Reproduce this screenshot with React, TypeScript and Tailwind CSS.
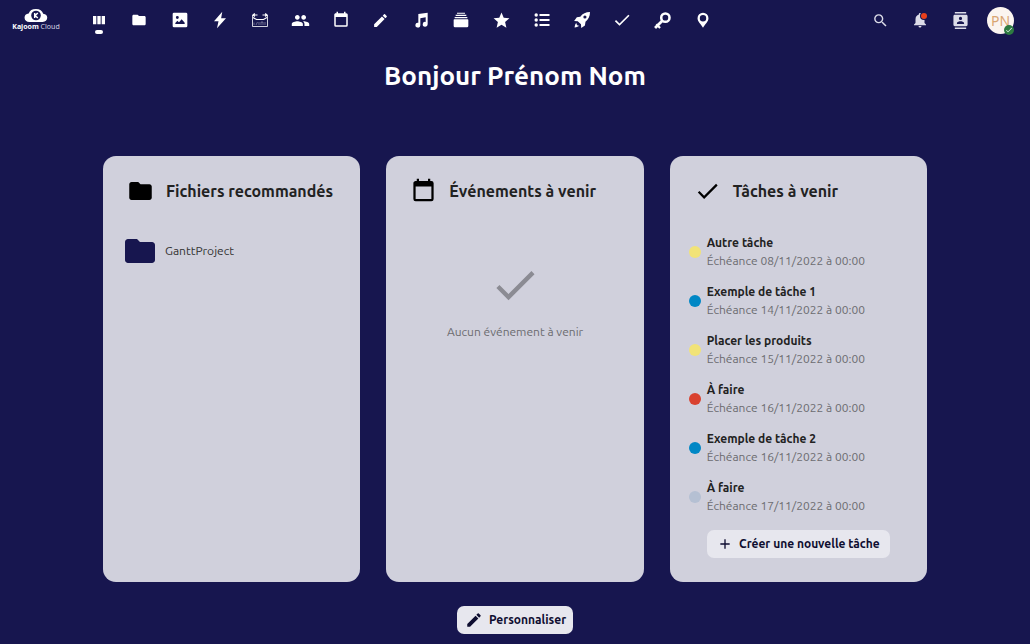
import type { ReactNode } from "react"
import {
  MdAdd,
  MdCheck,
  MdContacts,
  MdFolder,
  MdModeEdit,
  MdNotifications,
  MdPeople,
  MdSearch,
  MdStar,
} from "react-icons/md"

function Svg({ d, size, className }: { d: string; size: number; className?: string }) {
  return (
    <svg width={size} height={size} viewBox="0 0 24 24" fill="currentColor" className={className} aria-hidden="true">
      <path fillRule="evenodd" d={d} />
    </svg>
  )
}

const calendarPath =
  "M19 19H5V8h14m-3-7v2H8V1H6v2H5c-1.11 0-2 .89-2 2v14a2 2 0 0 0 2 2h14a2 2 0 0 0 2-2V5a2 2 0 0 0-2-2h-1V1"

function MailIcon() {
  return (
    <svg width="18" height="18" viewBox="0 0 18 18" fill="none" stroke="currentColor" aria-hidden="true">
      <path strokeWidth="1" opacity=".8" d="M1.500 4v11.500h15V4" />
      <path strokeWidth="1.200" d="M1.500 4h5M11.500 4h5M3.800 2.500L2 4l1.800 1.500M14.200 2.500L16 4l-1.800 1.500" />
      <path strokeWidth="1.200" d="M2 6.500l3.500 2h7L16 6.500" />
      <path strokeWidth="1" opacity=".35" d="M3 14v-2.500M5 14l1.500-3M8 11v3M10 14v-3h2v3M14 11v3" />
    </svg>
  )
}

function RocketIcon() {
  return (
    <svg width="18" height="18" viewBox="0 0 16 16" fill="currentColor" aria-hidden="true">
      <path
        fillRule="evenodd"
        d="M15.100.9c-3.800 0-6.500 1.400-8.600 4.100L3.400 5.500 1 8.800l3.200.2 2.900 2.800.2 3.300 3.300-2.300.5-3.300c2.700-2.100 4-4.800 4-8.600zM10.600 3.900a1.400 1.400 0 1 1 0 2.800 1.400 1.400 0 0 1 0-2.800z"
      />
      <path d="M3.200 10.400c-1 .8-1.600 2.200-1.800 4.200 2-.2 3.500-.8 4.200-1.800l-1.200.2-1.400-1.400z" />
    </svg>
  )
}

function KeyIcon() {
  return (
    <svg width="17" height="17" viewBox="0 0 16 16" fill="none" stroke="currentColor" aria-hidden="true">
      <circle cx="10.700" cy="5.300" r="3.900" strokeWidth="2.400" />
      <path strokeWidth="2.600" d="M7.800 8.200L1 15" />
      <path strokeWidth="2" d="M2.200 11.500l3.500 3.500" />
    </svg>
  )
}

function ListIcon() {
  return (
    <svg width="16" height="16" viewBox="0 0 16 16" fill="currentColor" aria-hidden="true">
      <circle cx="2.200" cy="3" r="1.700" />
      <circle cx="2.200" cy="8" r="1.700" />
      <circle cx="2.200" cy="13" r="1.700" />
      <path d="M5.500 2h10v2h-10zM5.500 7h10v2h-10zM5.500 12h10v2h-10z" />
    </svg>
  )
}

const apps: { name: string; icon: ReactNode }[] = [
  { name: "Tableau de bord", icon: <Svg size={16} d="M3 6h5v12.500H3zM9.500 6h5v12.500h-5zM16 6h5v12.500h-5z" /> },
  { name: "Fichiers", icon: <MdFolder size={16} /> },
  {
    name: "Photos",
    icon: (
      <Svg
        size={16}
        d="M3 1h18a2 2 0 0 1 2 2v18a2 2 0 0 1-2 2H3a2 2 0 0 1-2-2V3a2 2 0 0 1 2-2zM8 6a2.200 2.200 0 1 0 0 4.400A2.200 2.200 0 0 0 8 6zM5 18h14v-2l-4.500-5-4 4.500L8 13l-3 3.500z"
      />
    ),
  },
  { name: "Activité", icon: <Svg size={18} d="M15 1L4 13.500h6L8 23l12-13.500h-6.500z" /> },
  { name: "E-mail", icon: <MailIcon /> },
  { name: "Contacts", icon: <MdPeople size={19} /> },
  { name: "Agenda", icon: <Svg size={18} d={calendarPath} /> },
  { name: "Notes", icon: <MdModeEdit size={17} /> },
  {
    name: "Musique",
    icon: (
      <Svg
        size={16}
        d="M8 3l14-2v17.500a3.700 3.700 0 1 1-3-3.600V8l-8 1.200V19.700a3.700 3.700 0 1 1-3-3.600z"
      />
    ),
  },
  {
    name: "Deck",
    icon: <Svg size={16} d="M6 1h12v1.600H6zM4 4.200h16V6H4zM2.500 7.600h19v1.700h-19zM2 11h20a1 1 0 0 1 1 1v9a2 2 0 0 1-2 2H3a2 2 0 0 1-2-2v-9a1 1 0 0 1 1-1z" />,
  },
  { name: "Favoris", icon: <MdStar size={19} /> },
  { name: "Listes", icon: <ListIcon /> },
  { name: "Projets", icon: <RocketIcon /> },
  { name: "Tâches", icon: <MdCheck size={20} /> },
  { name: "Mots de passe", icon: <KeyIcon /> },
  {
    name: "Cartes",
    icon: (
      <Svg
        size={16}
        d="M12 1a8.200 8.200 0 0 0-8.200 8.200C3.800 14.500 9 18 12 23.500c3-5.500 8.200-9 8.200-14.300A8.200 8.200 0 0 0 12 1zm0 3.600a4.800 4.800 0 1 1 0 9.600 4.800 4.800 0 0 1 0-9.600z"
      />
    ),
  },
]

const tasks = [
  { title: "Autre tâche", due: "08/11/2022", color: "bg-[#f1e377]" },
  { title: "Exemple de tâche 1", due: "14/11/2022", color: "bg-[#0087c5]" },
  { title: "Placer les produits", due: "15/11/2022", color: "bg-[#f1e377]" },
  { title: "À faire", due: "16/11/2022", color: "bg-[#d9412f]" },
  { title: "Exemple de tâche 2", due: "16/11/2022", color: "bg-[#0087c5]" },
  { title: "À faire", due: "17/11/2022", color: "bg-[#b5c0d3]" },
]

function Logo() {
  return (
    <a href="#" className="flex w-[50px] flex-col items-center text-white">
      <svg width="24" height="13" viewBox="0 0 20 13" preserveAspectRatio="none" aria-hidden="true">
        <path fill="#fff" d="M4.500 13a4.300 4.300 0 0 1-.6-8.500A6.300 6.300 0 0 1 16 4.700 4.200 4.200 0 0 1 15.500 13z" />
        <ellipse cx="10" cy="6.500" rx="4" ry="4.800" fill="#17164f" />
        <path fill="none" stroke="#fff" strokeWidth="1.200" d="M8.900 4v5M11.500 4L9.200 6.500l2.300 2.500" />
      </svg>
      <span className="whitespace-nowrap font-['Noto_Sans',sans-serif] text-[7px] leading-[9px]">
        <b className="font-bold">Kajoom</b> <span className="text-[#d5d5e4]">Cloud</span>
      </span>
    </a>
  )
}

function Header() {
  return (
    <header className="flex h-10 items-center justify-between pl-[11px] pr-4">
      <div className="flex items-center gap-[18px]">
        <Logo />
        <nav className="grid w-[644px] grid-cols-16">
          {apps.map((app, index) => (
            <a key={app.name} href="#" aria-label={app.name} className="relative flex h-10 items-center justify-center text-white">
              {app.icon}
              {index === 0 && <span className="absolute bottom-[6px] h-1 w-2 rounded-full bg-white" />}
            </a>
          ))}
        </nav>
      </div>
      <div className="flex items-center text-[#dcdce8]">
        <button aria-label="Rechercher" className="flex h-10 w-10 items-center justify-center">
          <MdSearch size={17} />
        </button>
        <button aria-label="Notifications" className="relative flex h-10 w-10 items-center justify-center">
          <MdNotifications size={18} />
          <span className="absolute right-[13px] top-[13px] h-[6px] w-[6px] rounded-full bg-[#e9401c] ring-1 ring-[#17164f]" />
        </button>
        <button aria-label="Contacts" className="flex h-10 w-10 items-center justify-center">
          <MdContacts size={17} />
        </button>
        <button
          aria-label="Paramètres"
          className="relative ml-[7px] flex h-[27px] w-[27px] items-center justify-center rounded-full bg-[#fbf5f0] font-['Noto_Sans',sans-serif] text-[14px] text-[#d9a673]"
        >
          PN
          <span className="absolute -bottom-px right-0 flex h-[10px] w-[10px] items-center justify-center rounded-full bg-[#2d7b41] text-white">
            <MdCheck size={8} />
          </span>
        </button>
      </div>
    </header>
  )
}

function Panel({ title, icon, children }: { title: string; icon: ReactNode; children: ReactNode }) {
  return (
    <section className="flex min-w-0 flex-1 flex-col rounded-[13px] bg-[#d0d0dc] px-[13px] pb-6">
      <h2 className="flex h-[70px] items-center gap-3 whitespace-nowrap pl-[11px] text-[16px] font-bold text-[#222]">
        <span className="flex w-[27px] justify-center text-black">{icon}</span>
        {title}
      </h2>
      {children}
    </section>
  )
}

export default function App() {
  return (
    <div className="min-h-screen bg-[#17164f] font-['Ubuntu','Noto_Sans',sans-serif] text-[12px]">
      <Header />
      <main className="flex flex-col items-center px-6 pb-[11px]">
        <h1 className="mt-4 text-[26px] font-bold leading-10 text-white">Bonjour Prénom Nom</h1>
        <div className="mt-[60px] flex w-full max-w-[824px] gap-[26px]">
          <Panel title="Fichiers recommandés" icon={<MdFolder size={28} />}>
            <a href="#" className="mt-[7px] flex items-center gap-[7px] pl-[6px] text-[#333]">
              <MdFolder size={36} className="text-[#17164f]" />
              GanttProject
            </a>
          </Panel>
          <Panel title="Événements à venir" icon={<Svg size={28} d={calendarPath} />}>
            <div className="flex flex-col items-center pt-[33px] text-[#6c6c70]">
              <MdCheck size={52} className="text-[#8b8b93]" />
              <p className="mt-3">Aucun événement à venir</p>
            </div>
          </Panel>
          <Panel title="Tâches à venir" icon={<MdCheck size={32} />}>
            <ul className="pt-px">
              {tasks.map((task, index) => (
                <li key={index} className="flex h-[49px] items-center gap-[6px] pl-[6px]">
                  <span className={`h-3 w-3 shrink-0 rounded-full ${task.color}`} />
                  <a href="#" className="block leading-[18px]">
                    <span className="block font-bold text-[#222]">{task.title}</span>
                    <span className="block text-[#6c6c70]">Échéance {task.due} à 00:00</span>
                  </a>
                </li>
              ))}
            </ul>
            <button className="mt-[9px] flex h-7 items-center justify-center gap-[6px] self-center whitespace-nowrap rounded-[7px] bg-[#e7e7ee] px-[10px] font-bold text-[#0e0d30]">
              <MdAdd size={16} />
              Créer une nouvelle tâche
            </button>
          </Panel>
        </div>
        <button className="mt-[24px] flex h-7 items-center gap-[6px] rounded-[7px] bg-[#e7e7ee] pl-2 pr-[7px] font-bold text-[#0e0d30]">
          <MdModeEdit size={18} />
          Personnaliser
        </button>
      </main>
    </div>
  )
}
